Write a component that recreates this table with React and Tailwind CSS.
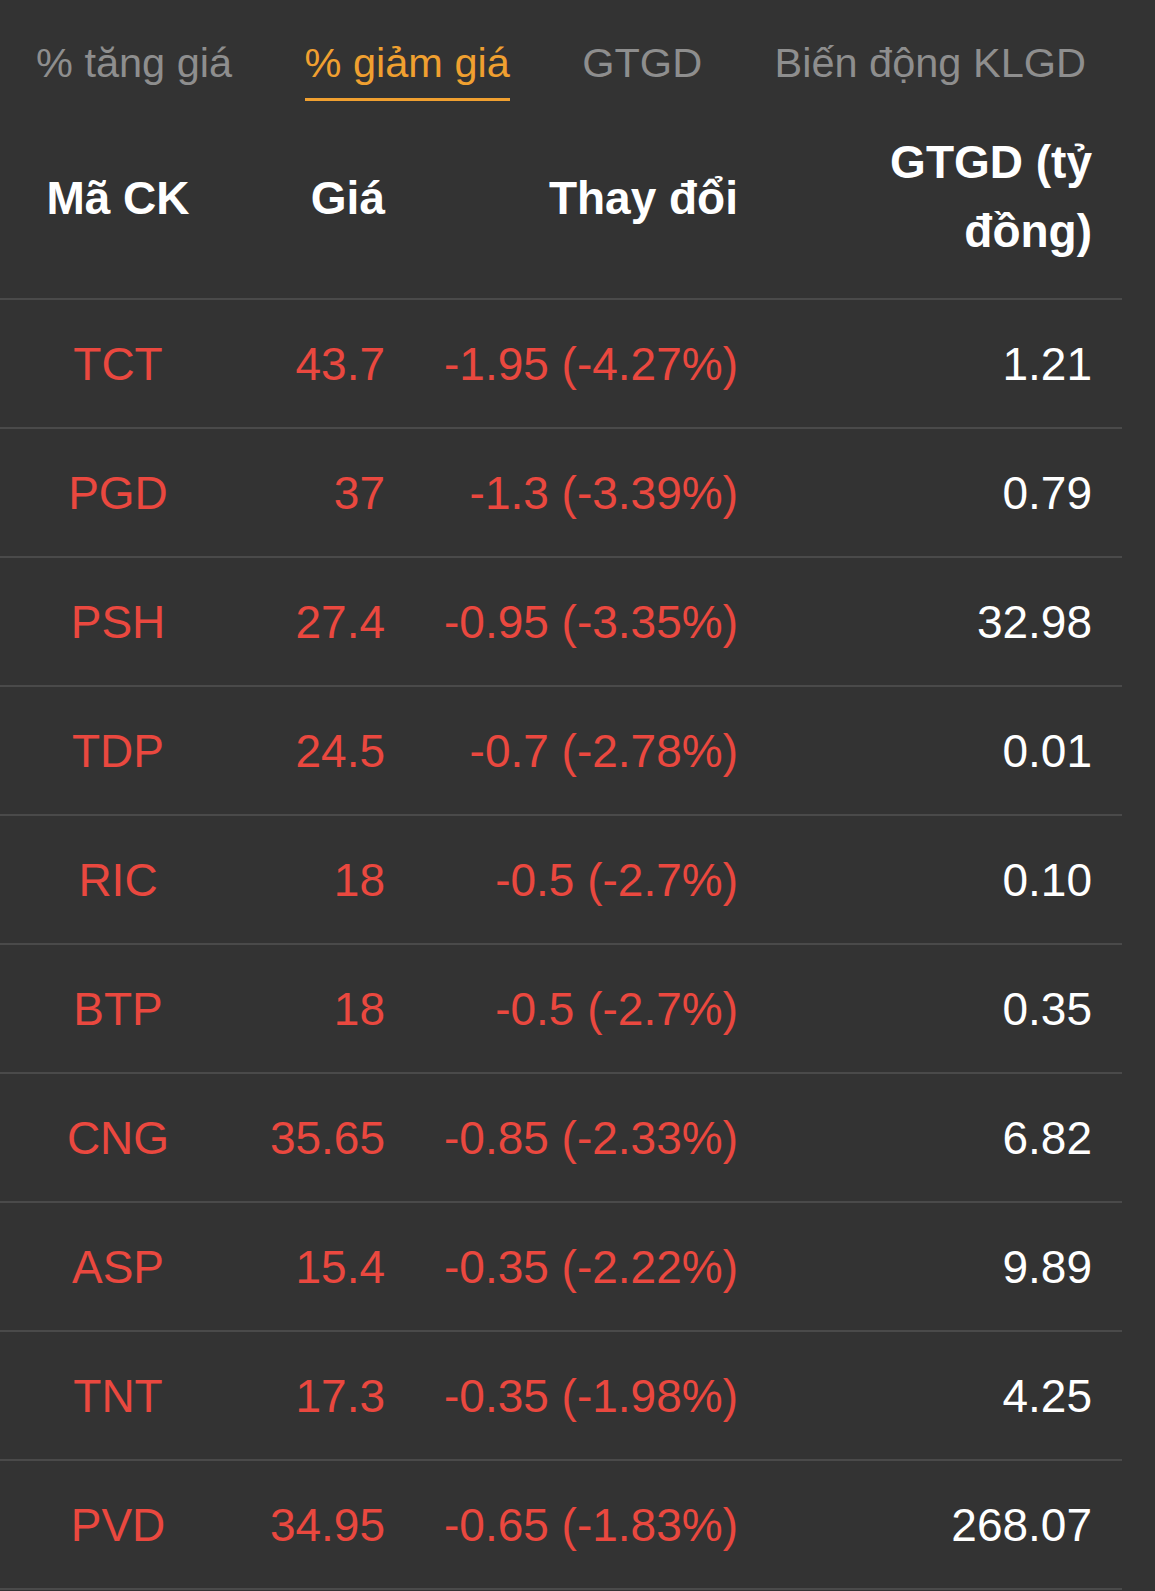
import React, {useState} from 'react';

const tabs = ['% tăng giá', '% giảm giá', 'GTGD', 'Biến động KLGD'];

const rows = [
    {code: 'TCT', price: '43.7', change: '-1.95 (-4.27%)', value: '1.21'},
    {code: 'PGD', price: '37', change: '-1.3 (-3.39%)', value: '0.79'},
    {code: 'PSH', price: '27.4', change: '-0.95 (-3.35%)', value: '32.98'},
    {code: 'TDP', price: '24.5', change: '-0.7 (-2.78%)', value: '0.01'},
    {code: 'RIC', price: '18', change: '-0.5 (-2.7%)', value: '0.10'},
    {code: 'BTP', price: '18', change: '-0.5 (-2.7%)', value: '0.35'},
    {code: 'CNG', price: '35.65', change: '-0.85 (-2.33%)', value: '6.82'},
    {code: 'ASP', price: '15.4', change: '-0.35 (-2.22%)', value: '9.89'},
    {code: 'TNT', price: '17.3', change: '-0.35 (-1.98%)', value: '4.25'},
    {code: 'PVD', price: '34.95', change: '-0.65 (-1.83%)', value: '268.07'},
];

const App = () => {
    const [active, setActive] = useState(1);

    return (
        <div className="min-h-screen w-full bg-[#333333] font-['Liberation_Sans',Arial,sans-serif]">
            <div className="w-[1122px]">
                {/*Tabs*/}
                <div className="flex justify-between px-[36px] pt-[39px]">
                    {tabs.map((t, i) => (
                        <button
                            key={t}
                            onClick={() => setActive(i)}
                            className={i === active
                                ? "pb-[11px] border-b-[3px] border-[#f0a030] text-[#f0a030] text-[41.5px] leading-[48px] whitespace-nowrap"
                                : "pb-[11px] border-b-[3px] border-transparent text-[#8e8e8e] text-[41.5px] leading-[48px] whitespace-nowrap"}
                        >
                            {t}
                        </button>
                    ))}
                </div>

                {/*Header*/}
                <div className="grid grid-cols-[236px_179px_353px_354px] h-[197px] pb-[4px] items-center text-white font-bold text-[46px] leading-[54px]">
                    <div className="text-center">Mã CK</div>
                    <div className="text-right pr-[30px]">Giá</div>
                    <div className="text-right pr-[30px] whitespace-nowrap">Thay đổi</div>
                    <div className="text-right pr-[30px] pl-[40px] leading-[69px] pb-[1px]">GTGD (tỷ đồng)</div>
                </div>

                {/*Rows*/}
                {rows.map((r, i) => (
                    <div
                        key={r.code}
                        className={i === rows.length - 1
                            ? "grid grid-cols-[236px_179px_353px_354px] h-[131px] items-center border-t-2 border-b-2 border-[#4a4a4a] text-[46px] leading-[52px]"
                            : "grid grid-cols-[236px_179px_353px_354px] h-[129px] items-center border-t-2 border-[#4a4a4a] text-[46px] leading-[52px]"}
                    >
                        <div className="text-center text-[#ea483f]">{r.code}</div>
                        <div className="text-right pr-[30px] text-[#ea483f]">{r.price}</div>
                        <div className="text-right pr-[30px] text-[#ea483f] whitespace-nowrap">{r.change}</div>
                        <div className="text-right pr-[30px] text-white">{r.value}</div>
                    </div>
                ))}
            </div>
        </div>
    );
};

export default App;
